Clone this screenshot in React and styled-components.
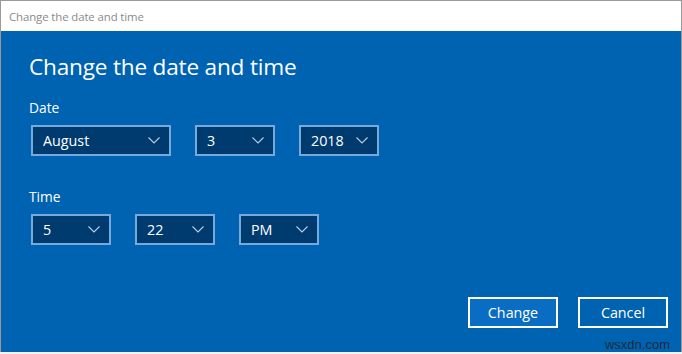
import React from 'react';
import styled, { createGlobalStyle } from 'styled-components';

const GlobalStyle = createGlobalStyle`
  html, body {
    margin: 0;
    padding: 0;
    background: #f3f3f3;
  }
  body {
    font-family: "Open Sans", "Noto Sans", sans-serif;
  }
`;

const Window = styled.div`
  width: 682px;
  height: 352px;
  box-sizing: border-box;
  border: 1px solid #9a9a9a;
  border-bottom: none;
  display: flex;
  flex-direction: column;
  background: #0063b1;
`;

const TitleBar = styled.div`
  height: 30px;
  flex: none;
  background: #ffffff;
  display: flex;
  align-items: center;
  padding-left: 8px;
  font-size: 11.4px;
  color: #8a8a8a;
  letter-spacing: -0.1px;
`;

const Body = styled.div`
  flex: 1;
  display: flex;
  flex-direction: column;
  padding: 21px 13px 0 28px;
  color: #ffffff;
`;

const Heading = styled.h1`
  margin: 0;
  font-weight: 400;
  font-size: 22.6px;
  line-height: 30px;
  letter-spacing: -0.2px;
`;

const Label = styled.div`
  font-size: 13.8px;
  line-height: 18px;
  margin-top: ${(p) => p.$top}px;
`;

const Row = styled.div`
  display: flex;
  gap: 24px;
  margin-top: 8px;
  padding-left: 2px;
`;

const Select = styled.div`
  width: ${(p) => p.$width}px;
  height: 31px;
  box-sizing: border-box;
  border: 2px solid #78a9dc;
  background: #003b70;
  display: flex;
  align-items: center;
  justify-content: space-between;
  padding: 0 9px 0 10px;
  font-size: 14.3px;
  color: #ffffff;
`;

const Chevron = styled.svg`
  width: 12px;
  height: 7px;
  flex: none;
`;

const Actions = styled.div`
  margin-top: auto;
  margin-bottom: 24px;
  display: flex;
  justify-content: flex-end;
  gap: 20px;
`;

const Button = styled.div`
  width: 90px;
  height: 31px;
  box-sizing: border-box;
  border: 2px solid #ffffff;
  background: ${(p) => (p.$primary ? '#0a6dc4' : 'transparent')};
  display: flex;
  align-items: center;
  justify-content: center;
  font-size: 14.3px;
  color: #ffffff;
`;

const Footer = styled.div`
  height: 2px;
  background: #f3f3f3;
`;

const Watermark = styled.div`
  position: absolute;
  right: 12px;
  bottom: 2px;
  font-family: "Liberation Sans", Arial, sans-serif;
  font-size: 13px;
  color: #1d2b3a;
`;

const Page = styled.div`
  position: relative;
  width: 682px;
  height: 354px;
  overflow: hidden;
`;

const Dropdown = ({ value, width }) => (
  <Select $width={width}>
    <span>{value}</span>
    <Chevron viewBox="0 0 12 7">
      <polyline points="0.5,0.5 6,6 11.5,0.5" fill="none" stroke="#b7cfe8" strokeWidth="1.1" />
    </Chevron>
  </Select>
);

export default function App() {
  return (
    <Page>
      <GlobalStyle />
      <Window>
        <TitleBar>Change the date and time</TitleBar>
        <Body>
          <Heading>Change the date and time</Heading>
          <Label $top={17}>Date</Label>
          <Row>
            <Dropdown value="August" width={140} />
            <Dropdown value="3" width={80} />
            <Dropdown value="2018" width={80} />
          </Row>
          <Label $top={32}>Time</Label>
          <Row>
            <Dropdown value="5" width={80} />
            <Dropdown value="22" width={80} />
            <Dropdown value="PM" width={80} />
          </Row>
          <Actions>
            <Button $primary>Change</Button>
            <Button>Cancel</Button>
          </Actions>
        </Body>
      </Window>
      <Footer />
      <Watermark>wsxdn.com</Watermark>
    </Page>
  );
}
